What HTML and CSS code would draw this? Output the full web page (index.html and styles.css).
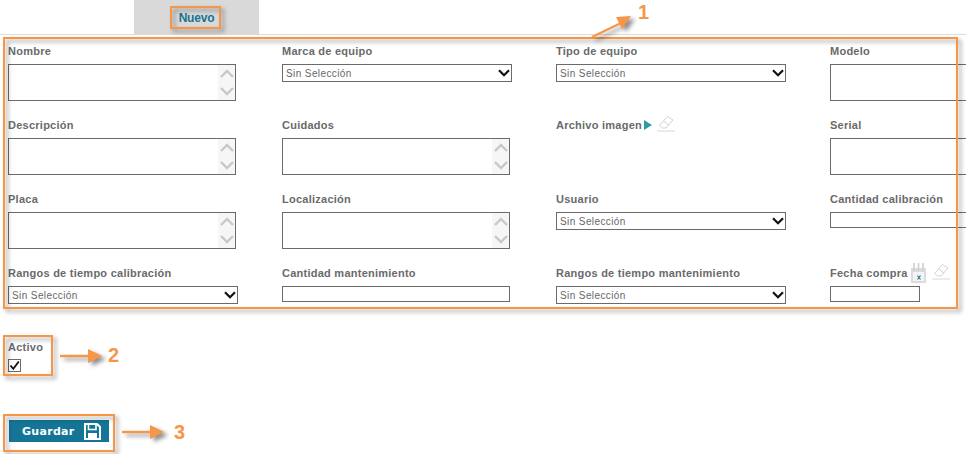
FILE: index.html
```html
<!DOCTYPE html>
<html lang="es">
<head>
<meta charset="utf-8">
<title>Nuevo equipo</title>
<link rel="stylesheet" href="styles.css">
</head>
<body>
<svg class="defs" width="0" height="0" aria-hidden="true">
  <defs>
    <symbol id="chev" viewBox="0 0 12 8"><path d="M1 1.2 6 6.2 11 1.2" fill="none" stroke="#111" stroke-width="2.2"/></symbol>
    <symbol id="up" viewBox="0 0 14 9"><path d="M1 8 7 2 13 8" fill="none" stroke="#c8c8c8" stroke-width="2.4"/></symbol>
    <symbol id="down" viewBox="0 0 14 9"><path d="M1 1 7 7 13 1" fill="none" stroke="#c8c8c8" stroke-width="2.4"/></symbol>
    <symbol id="eraser" viewBox="0 0 19 18"><path d="M2.5 11.5 10.5 2.5 16 6 9 14H5.500Z M6.500 7 12 11" fill="none" stroke="#d2d2d2" stroke-width="1"/><path d="M0 17H18" stroke="#d8d8d8" stroke-width="1"/></symbol>
  </defs>
</svg>

<header class="tabs">
  <div class="tab"><span class="tab-label">Nuevo</span></div>
</header>

<form class="form">
  <div class="grid">
    <div class="field"><label>Nombre</label><div class="memo"><textarea></textarea><div class="scroll"><svg class="sc"><use href="#up"/></svg><svg class="sc"><use href="#down"/></svg></div></div></div>
    <div class="field"><label>Marca de equipo</label><div class="select wide"><select><option>Sin Selección</option></select><svg class="chev"><use href="#chev"/></svg></div></div>
    <div class="field"><label>Tipo de equipo</label><div class="select wide"><select><option>Sin Selección</option></select><svg class="chev"><use href="#chev"/></svg></div></div>
    <div class="field"><label>Modelo</label><div class="memo"><textarea></textarea></div></div>

    <div class="field"><label>Descripción</label><div class="memo"><textarea></textarea><div class="scroll"><svg class="sc"><use href="#up"/></svg><svg class="sc"><use href="#down"/></svg></div></div></div>
    <div class="field"><label>Cuidados</label><div class="memo"><textarea></textarea><div class="scroll"><svg class="sc"><use href="#up"/></svg><svg class="sc"><use href="#down"/></svg></div></div></div>
    <div class="field"><div class="label-row"><label>Archivo imagen</label><svg class="play" viewBox="0 0 8 10"><path d="M0 0 8 5 0 10Z" fill="#2e9aa6"/></svg><svg class="eraser"><use href="#eraser"/></svg></div></div>
    <div class="field"><label>Serial</label><div class="memo"><textarea></textarea></div></div>

    <div class="field"><label>Placa</label><div class="memo"><textarea></textarea><div class="scroll"><svg class="sc"><use href="#up"/></svg><svg class="sc"><use href="#down"/></svg></div></div></div>
    <div class="field"><label>Localización</label><div class="memo"><textarea></textarea><div class="scroll"><svg class="sc"><use href="#up"/></svg><svg class="sc"><use href="#down"/></svg></div></div></div>
    <div class="field"><label>Usuario</label><div class="select wide"><select><option>Sin Selección</option></select><svg class="chev"><use href="#chev"/></svg></div></div>
    <div class="field"><label>Cantidad calibración</label><input class="text long" type="text"></div>

    <div class="field"><label>Rangos de tiempo calibración</label><div class="select wide"><select><option>Sin Selección</option></select><svg class="chev"><use href="#chev"/></svg></div></div>
    <div class="field"><label>Cantidad mantenimiento</label><input class="text mid" type="text"></div>
    <div class="field"><label>Rangos de tiempo mantenimiento</label><div class="select wide"><select><option>Sin Selección</option></select><svg class="chev"><use href="#chev"/></svg></div></div>
    <div class="field"><div class="label-row date-row"><label>Fecha compra</label>
      <svg class="cal" viewBox="0 0 16 20"><path d="M0 5H15V20H0Z" fill="#dcdcdc"/><path d="M3 0V8M7.500 0V8M12 0V8" stroke="#cfcfcf" stroke-width="1.600"/><path d="M2 9H13V18H2Z" fill="#f4f4f4"/><path d="M6.500 12.500 9.500 16.500M9.500 12.500 6.500 16.500" stroke="#1d7c91" stroke-width="1.200"/></svg>
      <svg class="eraser"><use href="#eraser"/></svg></div><input class="text short" type="text"></div>
  </div>

  <div class="active">
    <label>Activo</label>
    <span class="check"><svg viewBox="0 0 11 11"><path d="M1.500 5.500 4.300 8.800 9.800 1.500" fill="none" stroke="#111" stroke-width="1.800"/></svg></span>
  </div>

  <button class="save" type="button">Guardar
    <svg viewBox="0 0 17 17"><path d="M1 1H13L16 4V16H1Z" fill="none" stroke="#fff" stroke-width="2"/><path d="M4.500 2V6.500H12V2" fill="none" stroke="#fff" stroke-width="1.600"/><path d="M4 10H13V15H4Z" fill="#fff"/></svg>
  </button>
</form>

<div class="frame frame-tab"></div>
<div class="frame frame-form"></div>
<div class="frame frame-active"></div>
<div class="frame frame-save"></div>

<svg class="arrow arrow-1" viewBox="0 0 46 26"><path d="M1 24 30 10" stroke="#f79646" stroke-width="2.200" fill="none"/><path d="M25 4 40 3 31 16Z" fill="#f79646"/></svg>
<span class="num num-1">1</span>
<svg class="arrow arrow-2" viewBox="0 0 44 16"><path d="M0 8H30" stroke="#f79646" stroke-width="2.400"/><path d="M28 1 42 8 28 15Z" fill="#f79646"/></svg>
<span class="num num-2">2</span>
<svg class="arrow arrow-3" viewBox="0 0 44 16"><path d="M0 8H30" stroke="#f79646" stroke-width="2.400"/><path d="M28 1 42 8 28 15Z" fill="#f79646"/></svg>
<span class="num num-3">3</span>
</body>
</html>
```
FILE: styles.css
```css
* { box-sizing: border-box; }
html, body { margin: 0; height: 454px; overflow: hidden; background: #fff; }
body { position: relative; font-family: "Liberation Sans", Arial, sans-serif; }
.defs { position: absolute; }

.tabs { height: 35px; padding-left: 134px; border-bottom: 1px solid #dcdcdc; }
.tab { width: 125px; height: 35px; background: #d9d9d9; display: flex; justify-content: center; padding-top: 11px; }
.tab-label { font-size: 12px; font-weight: bold; color: #17738f; line-height: 14px; letter-spacing: -.2px; }

.form { padding: 9px 0 0 8px; }
.grid { display: grid; grid-template-columns: repeat(4, 274px); grid-auto-rows: 74px; width: 958px; overflow: hidden; }
.field { display: flex; flex-direction: column; align-items: flex-start; width: 274px; }
label { display: block; font-size: 11px; font-weight: bold; color: #6a6a6a; line-height: 14px; letter-spacing: .25px; white-space: nowrap; }
.field > label, .label-row { height: 20px; flex: none; }

.memo { position: relative; width: 228px; height: 37px; }
textarea { display: block; width: 100%; height: 100%; border: 1px solid #6b6b6b; background: #fff; resize: none; padding: 0; margin: 0; outline: 0; overflow: hidden; }
.scroll { position: absolute; top: 1px; right: 1px; bottom: 1px; width: 17px; background: #f6f6f6; display: flex; flex-direction: column; justify-content: space-between; align-items: center; padding: 3px 0; }
.sc { width: 14px; height: 9px; margin: 1px 0; display: block; }

.select { position: relative; height: 18px; }
.wide { width: 230px; }
select { display: block; width: 100%; height: 100%; appearance: none; -webkit-appearance: none; border: 1px solid #6b6b6b; border-radius: 0; background: #fff; color: #666; font: 10px "Liberation Sans", Arial, sans-serif; letter-spacing: .4px; padding: 0 0 0 3px; margin: 0; outline: 0; }
.chev { position: absolute; right: 2px; top: 5px; width: 12px; height: 8px; pointer-events: none; }

.text { display: block; height: 16px; border: 1px solid #6b6b6b; background: #fff; padding: 0; margin: 0; outline: 0; }
.long { width: 150px; }
.mid { width: 228px; }
.short { width: 90px; }

.label-row { display: flex; align-items: flex-start; }
.play { width: 8px; height: 10px; margin: 2px 0 0 2px; flex: none; }
.eraser { width: 19px; height: 18px; margin: -4px 0 0 5px; flex: none; }
.cal { width: 16px; height: 20px; margin: -3px 0 0 3px; flex: none; }

.active { height: 40px; }
.active label { height: 19px; }
.check { display: block; width: 13px; height: 13px; border: 1px solid #6b6b6b; background: #fff; }
.check svg { display: block; width: 11px; height: 11px; }

.save { display: flex; align-items: center; width: 100px; height: 22px; margin: 40px 0 0 1px; padding: 0 0 0 13px; border: 0; background: #147596; color: #fff; font: bold 11px "DejaVu Sans", Verdana, sans-serif; letter-spacing: .3px; }
.save svg { width: 17px; height: 17px; margin-left: 9px; flex: none; }

.frame { position: absolute; border: 2px solid #f79646; filter: drop-shadow(3px 3px 2px rgba(0,0,0,.38)); pointer-events: none; }
.frame-tab { left: 170px; top: 6px; width: 51px; height: 23px; }
.frame-form { left: 3px; top: 37px; width: 955px; height: 272px; }
.frame-active { left: 3px; top: 335px; width: 50px; height: 41px; }
.frame-save { left: 3px; top: 414px; width: 112px; height: 38px; }

.arrow { position: absolute; filter: drop-shadow(4px 3px 2px rgba(0,0,0,.45)); overflow: visible; }
.arrow-1 { left: 591px; top: 13px; width: 46px; height: 26px; }
.arrow-2 { left: 60px; top: 348px; width: 44px; height: 16px; }
.arrow-3 { left: 122px; top: 424px; width: 44px; height: 16px; }

.num { position: absolute; font: bold 20px/20px "Liberation Sans", Arial, sans-serif; color: #f79646; }
.num-1 { left: 638px; top: 2px; }
.num-2 { left: 108px; top: 345px; }
.num-3 { left: 174px; top: 422px; }
```
